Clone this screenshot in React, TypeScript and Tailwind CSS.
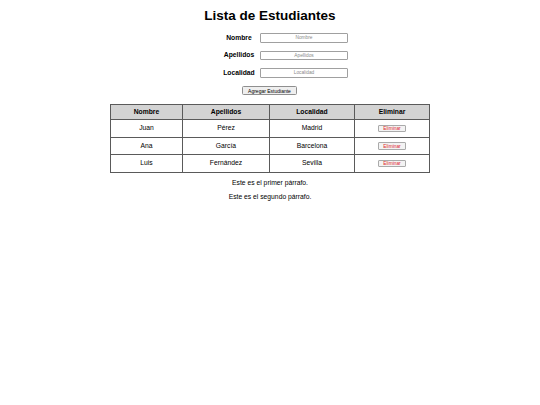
import { useState } from "react";

type Estudiante = { nombre: string; apellidos: string; localidad: string };

const INICIALES: Estudiante[] = [
  { nombre: "Juan", apellidos: "Pérez", localidad: "Madrid" },
  { nombre: "Ana", apellidos: "García", localidad: "Barcelona" },
  { nombre: "Luis", apellidos: "Fernández", localidad: "Sevilla" },
];

const FIELDS: { key: keyof Estudiante; label: string }[] = [
  { key: "nombre", label: "Nombre" },
  { key: "apellidos", label: "Apellidos" },
  { key: "localidad", label: "Localidad" },
];

export default function App() {
  const [estudiantes, setEstudiantes] = useState<Estudiante[]>(INICIALES);
  const [form, setForm] = useState<Estudiante>({
    nombre: "",
    apellidos: "",
    localidad: "",
  });

  function agregar() {
    if (!form.nombre.trim()) return;
    setEstudiantes((prev) => [...prev, form]);
    setForm({ nombre: "", apellidos: "", localidad: "" });
  }

  function eliminar(i: number) {
    setEstudiantes((prev) => prev.filter((_, idx) => idx !== i));
  }

  return (
    <div className="w-[540px] min-h-[405px] bg-white text-black font-['Liberation_Sans',Arial,sans-serif] text-[6.75px]">
      <h1 className="pt-[7px] text-center text-[13.5px] font-bold leading-[18px]">
        Lista de Estudiantes
      </h1>

      {/* Formulario */}
      <div className="mt-[8px] ml-[221px] flex flex-col gap-[8px]">
        {FIELDS.map((f) => (
          <div key={f.key} className="flex items-center h-[9.5px]">
            <label className="w-[36px] text-center font-bold">{f.label}</label>
            <input
              type="text"
              placeholder={f.label}
              value={form[f.key]}
              onChange={(e) => setForm({ ...form, [f.key]: e.target.value })}
              className="ml-[3px] w-[88px] h-[9.5px] border border-[#a0a0a0] rounded-[1px] bg-white px-[2px] text-center text-[4.8px] placeholder:text-[#8a8a8a] outline-none"
            />
          </div>
        ))}
      </div>

      <div className="mt-[8.5px] flex justify-center">
        <button
          onClick={agregar}
          className="ml-[-1px] h-[9px] w-[55px] p-0 rounded-[1.5px] border border-[#8f8f8f] bg-[#efefef] text-[5px] leading-[6px] text-black"
        >
          Agregar Estudiante
        </button>
      </div>

      {/* Tabla */}
      <table className="mt-[8.5px] mx-auto w-[320px] border-collapse border border-[#5a5a5a]">
        <thead>
          <tr className="bg-[#d3d3d3] h-[15.5px]">
            <th className="w-[72px] border border-[#5a5a5a] font-bold">Nombre</th>
            <th className="w-[87px] border border-[#5a5a5a] font-bold">Apellidos</th>
            <th className="w-[85px] border border-[#5a5a5a] font-bold">Localidad</th>
            <th className="border border-[#5a5a5a] font-bold">Eliminar</th>
          </tr>
        </thead>
        <tbody>
          {estudiantes.map((e, i) => (
            <tr key={i} className="h-[17.5px]">
              <td className="border border-[#5a5a5a] text-center">{e.nombre}</td>
              <td className="border border-[#5a5a5a] text-center">{e.apellidos}</td>
              <td className="border border-[#5a5a5a] text-center">{e.localidad}</td>
              <td className="border border-[#5a5a5a] text-center">
                <button
                  onClick={() => eliminar(i)}
                  className="h-[7.5px] w-[28px] p-0 rounded-[1px] border border-[#aaa] bg-[#f3f3f3] text-[4.8px] leading-[5px] text-[#e0262b]"
                >
                  Eliminar
                </button>
              </td>
            </tr>
          ))}
        </tbody>
      </table>

      <div className="mt-[6px] flex flex-col items-center gap-[6.5px] leading-[8px]">
        <p>Este es el primer párrafo.</p>
        <p>Este es el segundo párrafo.</p>
      </div>
    </div>
  );
}
